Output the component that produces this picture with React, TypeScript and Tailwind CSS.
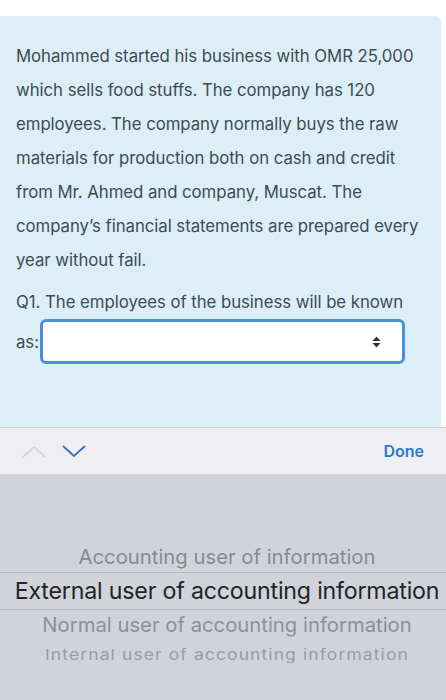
const para = [
  "Mohammed started his business with OMR 25,000",
  "which sells food stuffs. The company has 120",
  "employees. The company normally buys the raw",
  "materials for production both on cash and credit",
  "from Mr. Ahmed and company, Muscat. The",
  "company\u2019s financial statements are prepared every",
  "year without fail.",
];

export default function App() {
  return (
    <div className="w-[446px] h-[700px] bg-white flex flex-col overflow-hidden font-['Inter',sans-serif]">
      <div className="h-[16px] shrink-0" />

      {/* question panel */}
      <div className="w-[441px] h-[411px] shrink-0 bg-[#ddeff6] rounded-tr-[6px] px-[16px] pt-[23px] text-[#3c4b55] text-[16.8px] tracking-[-0.05px]">
        {para.map((l) => (
          <div key={l} className="h-[34px] leading-[34px] whitespace-nowrap">
            {l}
          </div>
        ))}
        <div className="h-[34px] leading-[34px] mt-[8px] whitespace-nowrap">
          Q1. The employees of the business will be known
        </div>
        <div className="flex items-center">
          <span className="mt-[2px]">as:</span>
          <div className="ml-[1px] w-[365px] h-[45px] bg-white rounded-[6px] border-[3px] border-[#4a8fdc] flex items-center justify-end pr-[21px]">
            <svg width="9" height="12" viewBox="0 0 9 12">
              <path d="M4.5 0.5 L8.5 5 H0.5 Z" fill="#333" />
              <path d="M4.5 11.5 L8.5 7 H0.5 Z" fill="#333" />
            </svg>
          </div>
        </div>
      </div>

      {/* keyboard toolbar */}
      <div className="h-[47px] shrink-0 bg-[#efeff1] border-t border-[#c9cdd2] flex items-center px-[22px]">
        <svg width="24" height="14" viewBox="0 0 24 14" className="mt-[1px]">
          <path d="M1 12 L12 2 L23 12" fill="none" stroke="#cfd1d4" strokeWidth="1.6" />
        </svg>
        <svg width="24" height="14" viewBox="0 0 24 14" className="ml-[16px]">
          <path d="M1 2 L12 12 L23 2" fill="none" stroke="#2f74c0" strokeWidth="1.8" />
        </svg>
        <span className="ml-auto text-[#2a78d0] text-[16px] font-semibold">Done</span>
      </div>

      {/* picker wheel */}
      <div className="flex-1 bg-[#d0d4da] flex flex-col items-center pt-[68px]">
        <div className="pl-[8px] h-[30px] leading-[30px] text-[20.3px] text-[#858a91] whitespace-nowrap">
          Accounting user of information
        </div>
        <div className="w-full h-[38px] pl-[8px] border-y border-[#b8bcc2] flex items-center justify-center text-[23.2px] text-[#222427] whitespace-nowrap tracking-[-0.2px]">
          External user of accounting information
        </div>
        <div className="pl-[8px] h-[30px] leading-[30px] text-[20.3px] text-[#8c9097] whitespace-nowrap">
          Normal user of accounting information
        </div>
        <div className="pl-[8px] h-[28px] leading-[28px] mt-[1px] text-[17.5px] text-[#989ca2] whitespace-nowrap tracking-[1.1px] scale-y-[0.85]">
          Internal user of accounting information
        </div>
      </div>
    </div>
  );
}
